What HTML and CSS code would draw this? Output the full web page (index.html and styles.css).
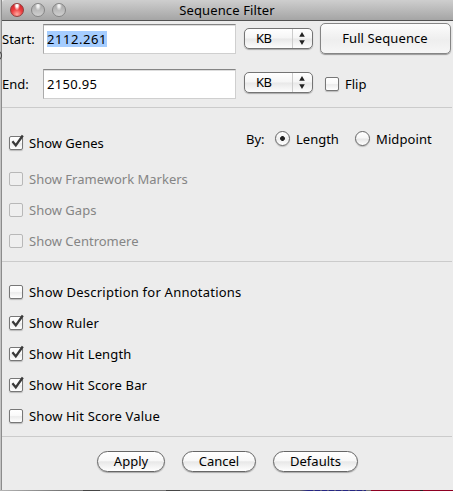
FILE: index.html
```html
<!DOCTYPE html>
<html lang="en">
<head>
<meta charset="utf-8">
<title>Sequence Filter</title>
<link rel="stylesheet" href="styles.css">
</head>
<body>
<svg class="defs" width="0" height="0" aria-hidden="true">
  <symbol id="tick" viewBox="0 0 16 17"><path d="M3.4 7.2 L6.8 11.4 L13.8 1.5" fill="none" stroke="#3a3a3a" stroke-width="2.3"/></symbol>
  <symbol id="arrows" viewBox="0 0 6 13"><path d="M3 0 L5.8 4.7 H.2Z M3 13 L.2 8.3 H5.8Z" fill="#222"/></symbol>
</svg>
<div class="window">
  <header class="titlebar">
    <div class="lights"><i class="light red"></i><i class="light"></i><i class="light"></i></div>
    <h1>Sequence Filter</h1>
  </header>
  <main>
    <section class="range">
      <div class="row start">
        <label class="name">Start:</label>
        <div class="field"><span class="selected">2112.261</span></div>
        <div class="select"><span>KB</span><b><svg width="6" height="13"><use href="#arrows"/></svg></b></div>
        <button class="full"><span>Full Sequence</span></button>
      </div>
      <div class="row end">
        <label class="name">End:</label>
        <div class="field"><span>2150.95</span></div>
        <div class="select"><span>KB</span><b><svg width="6" height="13"><use href="#arrows"/></svg></b></div>
        <div class="check flip"><i class="box"></i><span>Flip</span></div>
      </div>
    </section>
    <section class="features">
      <div class="genes">
        <div class="check"><i class="box"><svg width="16" height="17"><use href="#tick"/></svg></i><span>Show Genes</span></div>
        <div class="by">
          <span class="bylabel">By:</span>
          <i class="radio on"></i><span class="length">Length</span>
          <i class="radio"></i><span class="midpoint">Midpoint</span>
        </div>
      </div>
      <div class="check disabled"><i class="box"></i><span>Show Framework Markers</span></div>
      <div class="check disabled"><i class="box"></i><span>Show Gaps</span></div>
      <div class="check disabled"><i class="box"></i><span>Show Centromere</span></div>
    </section>
    <section class="display">
      <div class="check annotations"><i class="box"></i><span>Show Description for Annotations</span></div>
      <div class="check"><i class="box"><svg width="16" height="17"><use href="#tick"/></svg></i><span>Show Ruler</span></div>
      <div class="check"><i class="box"><svg width="16" height="17"><use href="#tick"/></svg></i><span>Show Hit Length</span></div>
      <div class="check"><i class="box"><svg width="16" height="17"><use href="#tick"/></svg></i><span>Show Hit Score Bar</span></div>
      <div class="check"><i class="box"></i><span>Show Hit Score Value</span></div>
    </section>
    <footer>
      <button class="pill apply">Apply</button>
      <button class="pill cancel">Cancel</button>
      <button class="pill defaults">Defaults</button>
    </footer>
  </main>
</div>
<div class="backdrop"></div>
<i class="edge-mark"></i>
</body>
</html>
```
FILE: styles.css
```css
* { box-sizing: border-box; }
body {
  margin: 0; width: 453px; height: 491px; overflow: hidden; position: relative;
  background: #c4c4c4; color: #000;
  font: 13px/16px "Noto Sans", sans-serif;
}
.defs { position: absolute; }
span, label { white-space: nowrap; }
.window { height: 490px; margin-left: 1px; border-left: 1px solid #8c8c8c; background: #ececec; }
.titlebar {
  height: 21px; display: flex; align-items: center; justify-content: center;
  background: linear-gradient(#cecece, #a5a5a5); border-bottom: 1px solid #515151;
  border-top-left-radius: 3px; position: relative;
}
.titlebar h1 { margin: 0 1px 0 0; font-size: 13px; font-weight: 400; line-height: 20px; letter-spacing: .13px; }
.lights { position: absolute; left: 8px; top: 3px; display: flex; gap: 7px; }
.light {
  width: 14px; height: 14px; border-radius: 50%; border: 1px solid #858585;
  background: radial-gradient(ellipse at 50% 12%, #f2f2f2 0 12%, transparent 35%), linear-gradient(#a6a6a6, #d0d0d0);
}
.light.red {
  border-color: #91403e;
  background: radial-gradient(ellipse at 50% 10%, #fff 0 12%, transparent 35%), radial-gradient(circle at 50% 85%, #ffaaa0, #ed3e40 45%, #c51d25);
}
.row { display: flex; }
.range { height: 87px; margin-right: 1px; border-bottom: 1px solid #cbcbcb; padding-top: 2px; }
.start { height: 46px; }
.name { width: 41px; padding-top: 8px; }
.end .name { padding-top: 7px; }
.field {
  width: 193px; height: 30px; margin-top: 1px; padding: 6px 3px; background: #fff;
  border: 1px solid #cfcfcf; border-top: 1px solid #858585; border-left-color: #aaa;
  box-shadow: inset 0 1px #ddd; line-height: 16px; letter-spacing: .3px;
}
.end .field { margin-top: 0; }
.selected { display: inline-block; height: 16px; background: #a5cdff; letter-spacing: .55px; }
.select {
  width: 69px; height: 21px; margin: 5px 0 0 8px; display: flex; align-items: center;
  border: 1px solid #747474; border-radius: 5px; box-shadow: 0 1px 1px #aaa;
  background: linear-gradient(#fff, #f5f5f5 48%, #e8e8e8 52%, #fdfdfd);
}
.end .select { margin-top: 3px; }
.select span { width: 47px; padding: 0 0 2px 11px; letter-spacing: -.5px; }
.select b { height: 19px; width: 20px; border-left: 1px solid #ccc; padding: 3px 0 0 6px; }
.select svg, .box svg { display: block; }
button { font: inherit; color: #000; padding: 0; }
.full {
  width: 131px; height: 31px; margin-left: 7px; border: 1px solid #858585; border-radius: 5px;
  padding: 0 1px 2px 0; letter-spacing: .1px;
  background: linear-gradient(#fcfcfc, #eee 55%, #f6f6f6); box-shadow: 0 1px 1px #999;
}
.check { display: flex; align-items: center; height: 31px; padding-left: 7px; }
.check span { margin-left: 6px; }
.box {
  width: 14px; height: 14px; border: 1px solid #777; border-radius: 2px;
  background: linear-gradient(#fff, #fafafa 45%, #ececec 55%, #fff); box-shadow: 0 1px 1px #bbb;
}
.box svg { margin: -3px 0 0 -1px; }
.flip { height: 30px; padding-left: 12px; }
.disabled { color: #858585; }
.disabled .box { border-color: #b8b8b8; background: #efefef; box-shadow: none; }
.features { height: 154px; margin-right: 1px; border-bottom: 1px solid #cbcbcb; padding-top: 19px; }
.genes { display: flex; justify-content: space-between; height: 36px; }
.by { display: flex; align-items: center; height: 23px; width: 206px; }
.bylabel { width: 29px; }
.radio {
  width: 15px; height: 15px; border: 1px solid #666; border-radius: 50%; margin-right: 6px;
  background: linear-gradient(#fff, #f7f7f7 45%, #e7e7e7 55%, #fff); box-shadow: 0 1px 1px #bbb;
}
.radio.on { background: radial-gradient(circle, #222 0 2px, transparent 2.8px), linear-gradient(#fff, #eee 55%, #fff); }
.length { width: 59px; }
.midpoint { letter-spacing: .1px; }
.display { height: 175px; margin-right: 1px; border-bottom: 1px solid #cbcbcb; padding-top: 14px; }
.display .check span { letter-spacing: .14px; }
.display .annotations span { letter-spacing: .23px; }
footer { display: flex; gap: 17px; padding: 14px 0 0 95px; }
.pill {
  height: 21px; border: 1px solid #666; border-radius: 11px; line-height: 19px;
  background: linear-gradient(#fff, #f8f8f8 45%, #e8e8e8 52%, #fff); box-shadow: 0 1px 1px #aaa;
}
.apply { width: 68px; }
.cancel { width: 74px; }
.defaults { width: 85px; }
.backdrop {
  height: 1px;
  background:
    repeating-linear-gradient(90deg, transparent 0 5px, #77777799 5px 7px) 308px 0 / 58px 1px no-repeat,
    linear-gradient(90deg, #b5b5b5, #777 60px 83px, #454545 83px 100px, #777 100px 166px, #454545 166px 180px, #666 180px 300px, #262684 308px 366px, #777 366px 371px, #8e0022 371px 420px, #222 420px 423px, #8e0022 423px);
}
/* sliver of the window behind, showing past the left edge */
.edge-mark {
  position: absolute; left: -6px; top: 51px; width: 8px; height: 9px;
  border: 1px solid #444; border-radius: 50%;
}
```
